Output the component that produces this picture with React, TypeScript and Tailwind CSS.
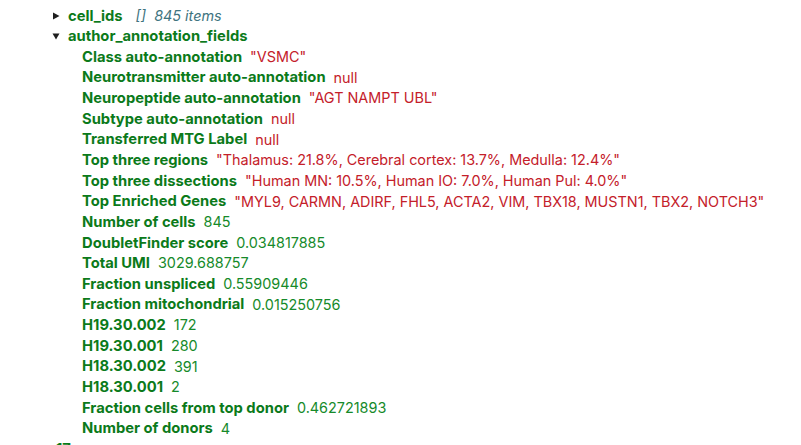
import React from "react";

type Val = { kind: "str" | "num" | "null"; text: string };

const fields: Array<[string, Val]> = [
  ["Class auto-annotation", { kind: "str", text: '"VSMC"' }],
  ["Neurotransmitter auto-annotation", { kind: "null", text: "null" }],
  ["Neuropeptide auto-annotation", { kind: "str", text: '"AGT NAMPT UBL"' }],
  ["Subtype auto-annotation", { kind: "null", text: "null" }],
  ["Transferred MTG Label", { kind: "null", text: "null" }],
  ["Top three regions", { kind: "str", text: '"Thalamus: 21.8%, Cerebral cortex: 13.7%, Medulla: 12.4%"' }],
  ["Top three dissections", { kind: "str", text: '"Human MN: 10.5%, Human IO: 7.0%, Human Pul: 4.0%"' }],
  ["Top Enriched Genes", { kind: "str", text: '"MYL9, CARMN, ADIRF, FHL5, ACTA2, VIM, TBX18, MUSTN1, TBX2, NOTCH3"' }],
  ["Number of cells", { kind: "num", text: "845" }],
  ["DoubletFinder score", { kind: "num", text: "0.034817885" }],
  ["Total UMI", { kind: "num", text: "3029.688757" }],
  ["Fraction unspliced", { kind: "num", text: "0.55909446" }],
  ["Fraction mitochondrial", { kind: "num", text: "0.015250756" }],
  ["H19.30.002", { kind: "num", text: "172" }],
  ["H19.30.001", { kind: "num", text: "280" }],
  ["H18.30.002", { kind: "num", text: "391" }],
  ["H18.30.001", { kind: "num", text: "2" }],
  ["Fraction cells from top donor", { kind: "num", text: "0.462721893" }],
  ["Number of donors", { kind: "num", text: "4" }],
];

function Caret({ open }: { open?: boolean }) {
  return (
    <svg width="8" height="8" viewBox="0 0 8 8" className="shrink-0">
      {open ? <path d="M0.5 1.5 L7.5 1.5 L4 7.5 Z" fill="#1f1f1f" /> : <path d="M1 0.5 L7.5 4 L1 7.5 Z" fill="#1f1f1f" />}
    </svg>
  );
}

function Row({ children, className = "" }: { children: React.ReactNode; className?: string }) {
  return <div className={"flex items-center h-[20.65px] whitespace-nowrap " + className}>{children}</div>;
}

const key = "font-bold text-[#0b7a1a] text-[14.75px]";

export default function App() {
  return (
    <div
      className="w-[801px] h-[445px] overflow-hidden bg-white text-[14.4px] relative"
      style={{ fontFamily: "Inter, 'Noto Sans', sans-serif" }}
    >
      <div className="mt-[-15.4px]">
        <Row className="pl-[82px]">
          <span className={key + " mb-[5px]"}>label_</span>
        </Row>
        <Row className="pl-[52px]">
          <Caret />
          <span className={"ml-[8px] " + key}>cell_ids</span>
          <span className="ml-[13px] italic text-[#3e7480]">[]&nbsp; 845 items</span>
        </Row>
        <Row className="pl-[52px]">
          <Caret open />
          <span className={"ml-[8px] " + key}>author_annotation_fields</span>
        </Row>
        {fields.map(([k, v]) => (
          <Row key={k} className="pl-[82px]">
            <span className={key}>{k}</span>
            <span className={"ml-[8px] " + (v.kind === "num" ? "text-[#168a2a]" : "text-[#c4202a]")}>{v.text}</span>
          </Row>
        ))}
        <Row className="pl-[56px]">
          <span className={key}>17</span>
        </Row>
      </div>
    </div>
  );
}
